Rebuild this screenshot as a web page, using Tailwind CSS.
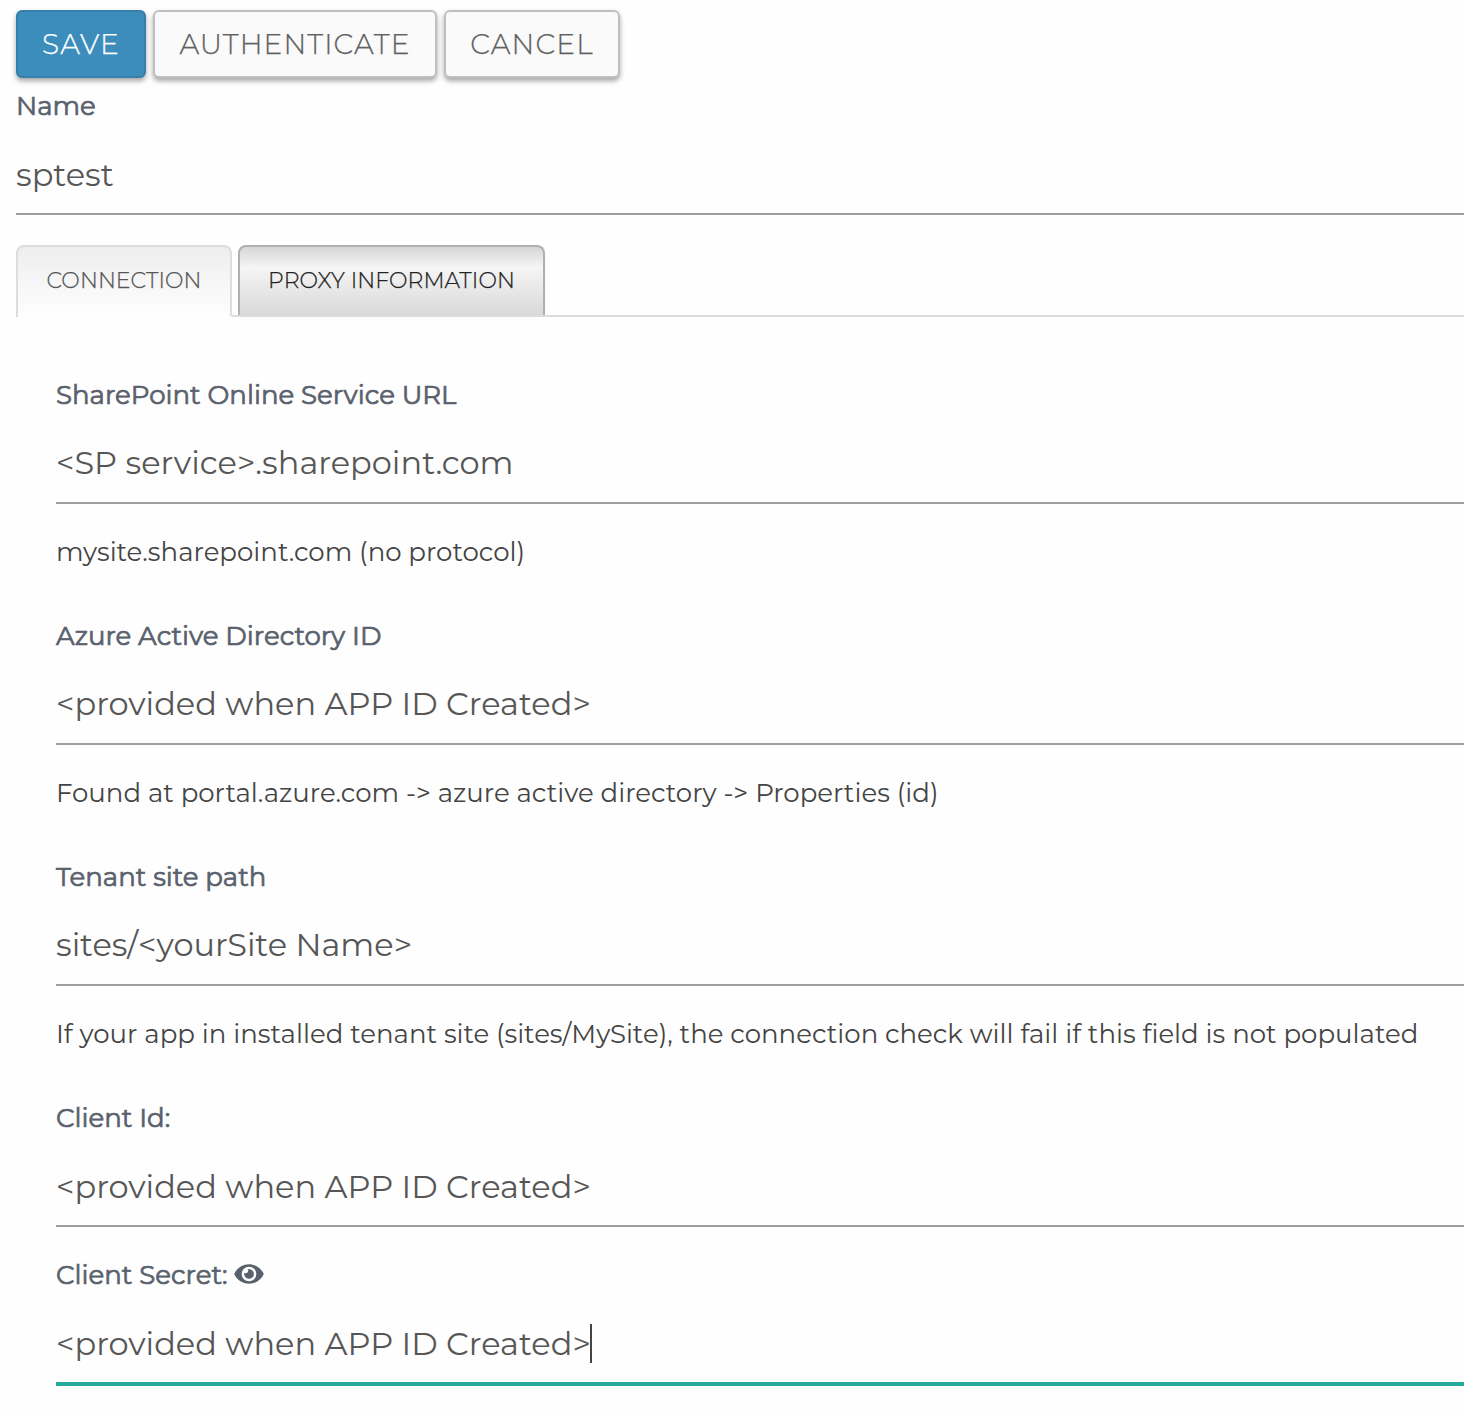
<!DOCTYPE html>
<html lang="en">
<head>
<meta charset="utf-8">
<title>Connection</title>
<script src="https://cdn.jsdelivr.net/npm/@tailwindcss/browser@4"></script>
</head>
<body class="h-[1416px] overflow-hidden bg-[#fefefe] font-['Montserrat','Inter',sans-serif] tracking-[0.016px] text-[#565656]">
<div class="flex h-[77px] items-start gap-[7px] pt-[10px] pl-4 text-[28px] font-light tracking-[1.12px] [-webkit-text-stroke:0.25px_currentColor]">
  <button class="flex h-[68px] w-[130px] items-center justify-center rounded-[6px] border-2 border-[#357fac] bg-[#3c8dbc] text-white shadow-[0_3px_5px_rgba(0,0,0,0.35)]">SAVE</button>
  <button class="flex h-[68px] w-[284px] items-center justify-center rounded-[6px] border-2 border-[#bfbfbf] bg-[#fafafa] text-[#606060] shadow-[0_3px_5px_rgba(0,0,0,0.35)]">AUTHENTICATE</button>
  <button class="flex h-[68px] w-[176px] items-center justify-center rounded-[6px] border-2 border-[#bfbfbf] bg-[#fafafa] text-[#606060] shadow-[0_3px_5px_rgba(0,0,0,0.35)]">CANCEL</button>
</div>
<div class="pl-4">
  <label class="block h-[58px] text-[26px] leading-[58px] text-[#59616d] [-webkit-text-stroke:0.7px_#59616d]">Name</label>
  <div class="h-[80px] border-b-2 border-[#9e9e9e] text-[32px] leading-[80px]">sptest</div>
  <div class="mt-[30px] flex h-[72px] text-[22px] leading-[68px] font-light tracking-[0.08px] [-webkit-text-stroke:0.25px_currentColor]">
    <div class="w-[216px] rounded-t-[8px] rounded-br-[3px] border-2 border-b-0 border-[#dddddd] bg-linear-to-b from-[#eeeeee] to-[#fefefe] text-center">CONNECTION</div>
    <div class="w-[6px] border-b-2 border-[#dddddd]"></div>
    <div class="w-[307px] border-b-2 border-[#dddddd]"><div class="h-[70px] rounded-t-[8px] border-2 border-b-0 border-[#b0b0b0] bg-linear-to-b from-[#d6d6d6] via-[#f5f5f5] via-30% to-[#d9d9d9] text-center text-[#222222]">PROXY INFORMATION</div></div>
    <div class="flex-1 border-b-2 border-[#dddddd]"></div>
  </div>
</div>
<div class="pt-[49px] pl-14 whitespace-nowrap">
  <div class="h-[241px]">
    <label class="block h-[58px] text-[26px] leading-[58px] text-[#59616d] [-webkit-text-stroke:0.7px_#59616d]">SharePoint Online Service URL</label>
    <div class="h-[80px] border-b-2 border-[#9e9e9e] text-[32px] leading-[78px]">&lt;SP service&gt;.sharepoint.com</div>
    <p class="text-[26px] leading-[96px] text-[#444444]">mysite.sharepoint.com (no protocol)</p>
  </div>
  <div class="h-[241px]">
    <label class="block h-[58px] text-[26px] leading-[58px] text-[#59616d] [-webkit-text-stroke:0.7px_#59616d]">Azure Active Directory ID</label>
    <div class="h-[80px] border-b-2 border-[#9e9e9e] text-[32px] leading-[78px]">&lt;provided when APP ID Created&gt;</div>
    <p class="text-[26px] leading-[96px] text-[#444444]">Found at portal.azure.com -&gt; azure active directory -&gt; Properties (id)</p>
  </div>
  <div class="h-[241px]">
    <label class="block h-[58px] text-[26px] leading-[58px] text-[#59616d] [-webkit-text-stroke:0.7px_#59616d]">Tenant site path</label>
    <div class="h-[80px] border-b-2 border-[#9e9e9e] text-[32px] leading-[78px]">sites/&lt;yourSite Name&gt;</div>
    <p class="text-[26px] leading-[96px] text-[#444444]">If your app in installed tenant site (sites/MySite), the connection check will fail if this field is not populated</p>
  </div>
  <div class="h-[157px]">
    <label class="block h-[58px] text-[26px] leading-[58px] text-[#59616d] [-webkit-text-stroke:0.7px_#59616d]">Client Id:</label>
    <div class="h-[80px] border-b-2 border-[#9e9e9e] text-[32px] leading-[80px]">&lt;provided when APP ID Created&gt;</div>
  </div>
  <div>
    <label class="flex h-[58px] items-center gap-[6px] text-[26px] leading-[58px] text-[#59616d] [-webkit-text-stroke:0.7px_#59616d]">Client Secret:
      <svg class="-mt-[2px] h-[26px] w-[30px] stroke-none" viewBox="0 0 576 512" fill="#59616d"><path d="M572.52 241.4C518.29 135.59 410.93 64 288 64S57.68 135.64 3.48 241.41a32.35 32.35 0 0 0 0 29.19C57.71 376.41 165.07 448 288 448s230.32-71.64 284.52-177.41a32.35 32.35 0 0 0 0-29.19zM288 400a144 144 0 1 1 144-144 143.93 143.93 0 0 1-144 144zm0-240a95.31 95.31 0 0 0-25.31 3.79 47.85 47.85 0 0 1-66.9 66.9A95.78 95.78 0 1 0 288 160z"/></svg>
    </label>
    <div class="flex h-[82px] border-b-4 border-[#26a69a] text-[32px] leading-[80px]">&lt;provided when APP ID Created&gt;<span class="-ml-px mt-5 h-[39px] w-[2px] bg-[#444444]"></span></div>
  </div>
</div>
</body>
</html>
